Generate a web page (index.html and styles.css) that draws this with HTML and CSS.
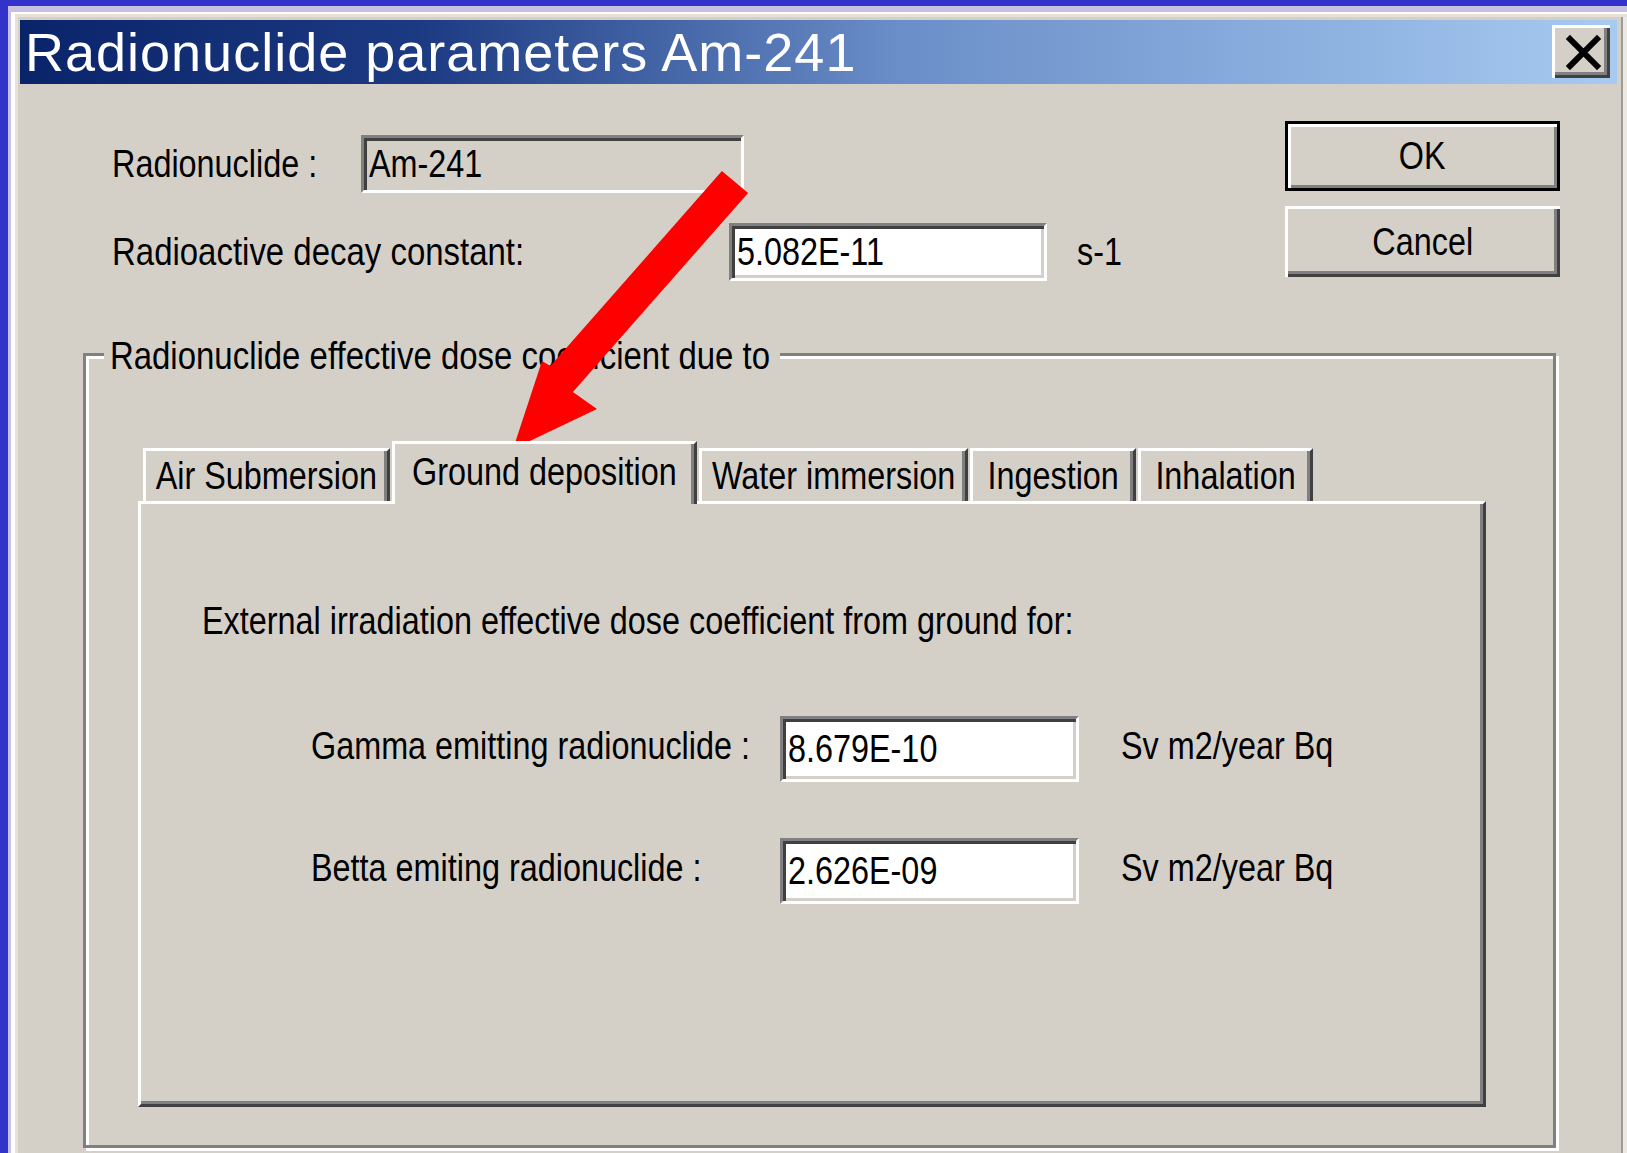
FILE: index.html
```html
<!DOCTYPE html>
<html lang="en">
<head>
<meta charset="utf-8">
<title>Radionuclide parameters Am-241</title>
<link rel="stylesheet" href="styles.css">
</head>
<body>
  <div class="window">
    <div class="titlebar">
      <span class="title">Radionuclide parameters Am-241</span>
      <span class="close" aria-label="Close">
        <svg width="58" height="53" viewBox="0 0 58 53">
          <path d="M18 14 L45 41 M45 14 L18 41" stroke="#000" stroke-width="6" stroke-linecap="square" fill="none"/>
        </svg>
      </span>
    </div>

    <div class="client">
      <div class="top">
        <div class="fields">
          <div class="row row-nuclide">
            <label class="lbl lbl-nuclide"><span class="t">Radionuclide :</span></label>
            <div class="field field-ro field-nuclide"><span class="t">Am-241</span></div>
          </div>
          <div class="row row-decay">
            <label class="lbl lbl-decay"><span class="t">Radioactive decay constant:</span></label>
            <div class="field field-decay"><span class="t">5.082E-11</span></div>
            <span class="unit unit-decay"><span class="t">s-1</span></span>
          </div>
        </div>
        <div class="buttons">
          <div class="btn btn-default"><span class="t tc">OK</span></div>
          <div class="btn btn-cancel"><span class="t tc">Cancel</span></div>
        </div>
      </div>

      <div class="group">
        <div class="legend">Radionuclide effective dose coefficient due to</div>
        <div class="tabset">
          <div class="tabs">
            <div class="tab"><span class="t tc">Air Submersion</span></div>
            <div class="tab tab-sel"><span class="t tc">Ground deposition</span></div>
            <div class="tab"><span class="t tc">Water immersion</span></div>
            <div class="tab"><span class="t tc">Ingestion</span></div>
            <div class="tab"><span class="t tc">Inhalation</span></div>
          </div>
          <div class="panel">
            <div class="panel-heading"><span class="t">External irradiation effective dose coefficient from ground for:</span></div>
            <div class="coef-row">
              <label class="coef-lbl"><span class="t">Gamma emitting radionuclide :</span></label>
              <div class="field field-coef"><span class="t">8.679E-10</span></div>
              <span class="unit unit-coef"><span class="t">Sv m2/year Bq</span></span>
            </div>
            <div class="coef-row coef-row-next">
              <label class="coef-lbl"><span class="t">Betta emiting radionuclide :</span></label>
              <div class="field field-coef"><span class="t">2.626E-09</span></div>
              <span class="unit unit-coef"><span class="t">Sv m2/year Bq</span></span>
            </div>
          </div>
        </div>
      </div>
    </div>
  </div>

  <!-- red callout arrow pointing at the selected tab -->
  <svg class="callout" width="1627" height="1153" viewBox="0 0 1627 1153">
    <polygon fill="#ff0000" points="721.9,171.1 748.1,192.9 572.9,392 597,409 513,449 542,361 550.4,366"/>
  </svg>
</body>
</html>
```

FILE: styles.css
```css
html, body {
  margin: 0;
}

body {
  position: relative;
  box-sizing: border-box;
  width: 1627px;
  height: 1153px;
  padding: 6px 0 0 8px;
  overflow: hidden;
  background: #3333cc;
  font-family: "Liberation Sans", Arial, sans-serif;
  font-size: 39px;
  line-height: 44px;
  color: #000;
}

/* narrow dialog lettering */
.t {
  display: inline-block;
  white-space: nowrap;
  transform: scaleX(0.83);
  transform-origin: 0 50%;
}

.tc {
  transform-origin: 50% 50%;
}

/* ---------- window frame ---------- */
.window {
  box-sizing: border-box;
  height: 1147px;
  padding: 14px 10px 0 12px;
  background: #d4d0c8;
  box-shadow:
    inset 0 6px 0 #c8c0e0,
    inset 3px 0 0 #c8c0e0,
    inset 0 8px 0 #ffffff,
    inset 7px 0 0 #ffffff,
    inset 0 11px 0 #e6e2da,
    inset 10px 0 0 #e6e2da,
    inset -4px 0 0 #ece9e2,
    inset -6px 0 0 #a09c94;
}

.titlebar {
  display: flex;
  align-items: flex-start;
  height: 64px;
  background: linear-gradient(90deg, #0a246a 0%, #1c3a82 25%, #6a8ec8 55%, #a6caf0 100%);
}

.title {
  flex: 1;
  padding: 2px 0 0 5px;
  font-size: 54px;
  line-height: 60px;
  letter-spacing: 1px;
  color: #ffffff;
  white-space: nowrap;
}

.close {
  flex: none;
  width: 58px;
  height: 53px;
  margin: 5px 7px 0 0;
  background: #d4d0c8;
  box-shadow:
    inset 3px 3px 0 #ffffff,
    inset -3px -3px 0 #404040,
    inset -6px -6px 0 #808080;
}

.close svg {
  display: block;
}

/* ---------- top area ---------- */
.top {
  display: flex;
}

.fields {
  margin: 51px 0 0 92px;
}

.row {
  display: flex;
  align-items: center;
  height: 58px;
}

.row-decay {
  margin-top: 30px;
}

.lbl {
  flex: none;
}

.lbl-nuclide {
  width: 249px;
}

.lbl-decay {
  width: 617px;
}

.lbl-decay .t {
  transform: scaleX(0.845);
}

.field {
  flex: none;
  box-sizing: border-box;
  display: flex;
  align-items: center;
  height: 58px;
  padding-left: 5px;
  background: #ffffff;
  border-style: solid;
  border-width: 3px;
  border-color: #808080 #ffffff #ffffff #808080;
  box-shadow:
    inset 3px 3px 0 #404040,
    inset -3px -3px 0 #d4d0c8;
}

.field-ro {
  background: #d4d0c8;
}

.field-nuclide {
  width: 383px;
}

.field-decay {
  width: 318px;
}

.unit-decay {
  margin-left: 30px;
}

.buttons {
  display: flex;
  flex-direction: column;
  gap: 15px;
  width: 275px;
  margin: 37px 57px 0 auto;
}

.btn {
  box-sizing: border-box;
  display: flex;
  align-items: center;
  justify-content: center;
  height: 71px;
  background: #d4d0c8;
  box-shadow:
    inset 3px 3px 0 #ffffff,
    inset -3px -3px 0 #404040,
    inset -6px -6px 0 #808080;
}

.btn-default {
  height: 70px;
  border: 3px solid #000000;
  box-shadow:
    inset 3px 3px 0 #ffffff,
    inset -3px -3px 0 #808080;
}

/* ---------- group box ---------- */
.group {
  box-sizing: border-box;
  width: 1473px;
  height: 795px;
  margin: 72px 0 0 63px;
  border: 3px solid #808080;
  box-shadow:
    3px 3px 0 #ffffff,
    inset 3px 3px 0 #ffffff;
}

.legend {
  width: max-content;
  margin: -22px 0 0 18px;
  padding: 0 12px 0 7px;
  background: #d4d0c8;
  white-space: nowrap;
  transform: scaleX(0.845);
  transform-origin: 0 50%;
}

.tabset {
  width: 1348px;
  margin: 63px 0 0 52px;
}

.tabs {
  display: grid;
  grid-template-columns: 247px 305px 269px 166px 175px;
  column-gap: 2px;
  align-items: end;
  padding-left: 5px;
}

.tab {
  box-sizing: border-box;
  display: flex;
  align-items: center;
  justify-content: center;
  height: 53px;
  border-top: 3px solid #ffffff;
  border-left: 3px solid #ffffff;
  border-right: 3px solid #404040;
  box-shadow: inset -3px 0 0 #808080;
  background: #d4d0c8;
}

.tab-sel {
  position: relative;
  z-index: 1;
  height: 63px;
  margin-bottom: -3px;
  padding-bottom: 5px;
}

.panel {
  box-sizing: border-box;
  height: 606px;
  padding: 95px 0 0 61px;
  border-style: solid;
  border-width: 3px;
  border-color: #ffffff #404040 #404040 #ffffff;
  box-shadow: inset -3px -3px 0 #808080;
}

.coef-row {
  display: flex;
  align-items: center;
  height: 66px;
  margin: 73px 0 0 109px;
}

.coef-row-next {
  margin-top: 56px;
}

.coef-lbl {
  flex: none;
  width: 469px;
  margin-top: -6px;
}

.field-coef {
  width: 299px;
  height: 66px;
}

.unit-coef {
  margin: -6px 0 0 42px;
}

/* ---------- annotation ---------- */
.callout {
  position: absolute;
  left: 0;
  top: 0;
  pointer-events: none;
}
```
